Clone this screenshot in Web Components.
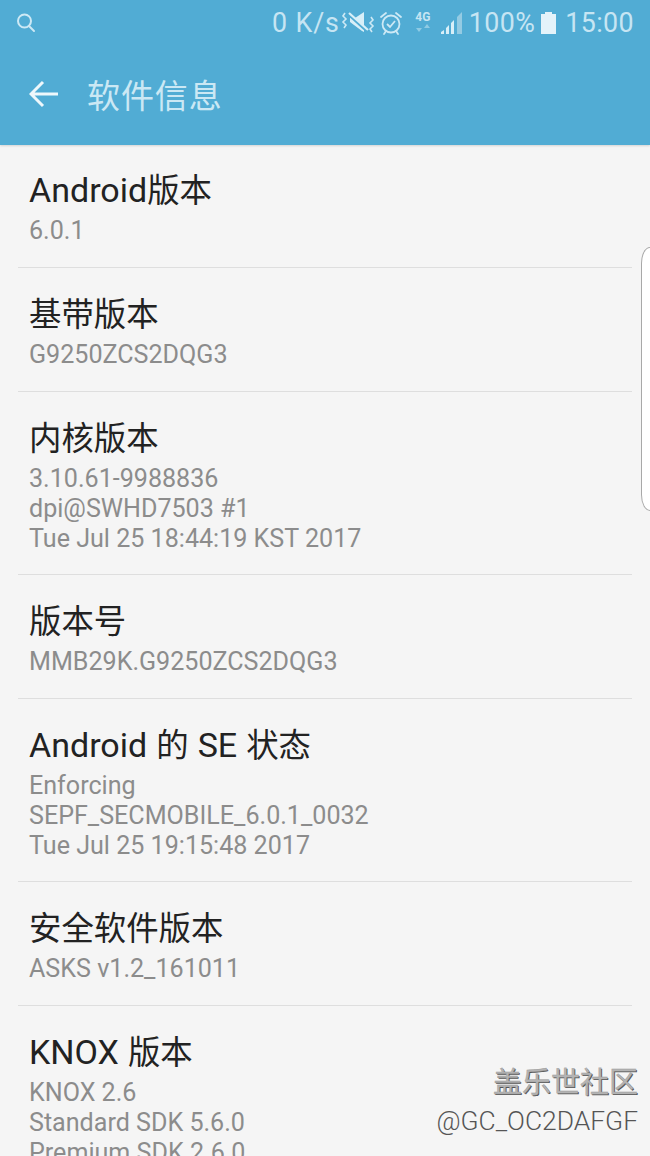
<!DOCTYPE html>
<html>
<head>
<meta charset="utf-8">
<style>
html, body { margin: 0; padding: 0; }
body {
  width: 650px; height: 1156px; overflow: hidden; position: relative;
  background: #f5f5f5;
  font-family: Roboto, "Noto Sans CJK SC", sans-serif;
}
</style>
</head>
<body>
<app-header title-text="软件信息"></app-header>
<info-list>
  <info-row head="Android版本"><div>6.0.1</div></info-row>
  <info-row head="基带版本"><div>G9250ZCS2DQG3</div></info-row>
  <info-row head="内核版本" long><div>3.10.61-9988836</div><div>dpi@SWHD7503 #1</div><div>Tue Jul 25 18:44:19 KST 2017</div></info-row>
  <info-row head="版本号"><div>MMB29K.G9250ZCS2DQG3</div></info-row>
  <info-row head="Android 的 SE 状态" long><div>Enforcing</div><div>SEPF_SECMOBILE_6.0.1_0032</div><div>Tue Jul 25 19:15:48 2017</div></info-row>
  <info-row head="安全软件版本"><div>ASKS v1.2_161011</div></info-row>
  <info-row head="KNOX 版本" last long><div>KNOX 2.6</div><div>Standard SDK 5.6.0</div><div>Premium SDK 2.6.0</div></info-row>
</info-list>
<edge-handle></edge-handle>
<water-mark></water-mark>

<script>
// top blue part: status bar + title bar
class AppHeader extends HTMLElement {
  constructor(){
    super();
    this.attachShadow({mode:"open"});
    this.shadowRoot.innerHTML = `
<style>
:host { display: block; background: #51acd4; height: 145px; box-shadow: 0 1px 2px #00000022; position: relative; color: #c6e5f3; }
#status { height: 45px; display: flex; align-items: center; padding: 0 16px 0 16px; box-sizing: border-box; font-size: 26.8px; letter-spacing: .4px; }
#status svg { display: block; flex: none; }
#right { margin-left: auto; display: flex; align-items: center; }
#bar { height: 100px; display: flex; align-items: center; padding: 0 0 2px 29px; box-sizing: border-box; }
#title { margin-left: 28px; font-size: 33px; letter-spacing: .9px; color: #cbe8f4; }
#net { margin-left: 10px; width: 20px; height: 26px; display: flex; flex-direction: column; align-items: center; font: bold 12px/14px Roboto, sans-serif; letter-spacing: 0; }
</style>
<div id="status">
  <svg width="20" height="20" viewBox="0 0 20 20" fill="none" stroke="#cde9f5" stroke-width="2"><circle cx="8.500" cy="8" r="6.500"/><path d="M13 13l5 5" stroke-linecap="round"/></svg>
  <div id="right">
    <span style="letter-spacing:.9px">0 K/s</span>
    <svg style="margin-left:1px" width="34" height="28" viewBox="0 0 34 28" fill="none" stroke="#cde9f5" stroke-width="1.600">
      <path d="M4 4l-2 3 3 3-3 3 3 3-2 3" />
      <path d="M30 8l2 3-3 3 3 3-3 3 2 3" />
      <path d="M9 9h5l9-6v20l-2-1-12-9z" fill="#d8eff8" stroke="none"/>
      <path d="M6 4l21 19" stroke="#51acd4" stroke-width="3"/>
      <path d="M8 4l19 17" stroke="#d8eff8" stroke-width="2.200"/>
    </svg>
    <svg style="margin-left:4px" width="24" height="26" viewBox="0 0 24 26" fill="none" stroke="#cde9f5" stroke-width="1.800">
      <circle cx="12" cy="14" r="8.500"/>
      <path d="M8 14l3 3 5-6"/>
      <path d="M2 7l5-4M22 7l-5-4M5 24l2-3M19 24l-2-3" stroke-linecap="round"/>
    </svg>
    <div id="net">4G<svg width="16" height="8" viewBox="0 0 16 8" fill="#8fcbe4"><path d="M4 0v4H1l3 4 3-4H4zM12 8V4H9l3-4 3 4h-3z"/></svg></div>
    <svg style="margin-left:8px" width="22" height="24" viewBox="0 0 22 24" fill="#d8eff8">
      <path d="M0 21l3-2v4H0zM5 17l3-3v9H5zM10 12l3-3v14h-3z"/><path d="M16 6l5-5v22h-5z" fill="#94cbe3"/>
    </svg>
    <span style="margin-left:6px">100%</span>
    <svg style="margin-left:6px" width="15" height="22" viewBox="0 0 15 22" fill="#e4f3fa"><path d="M4 0h7v2h4v20H0V2h4z"/></svg>
    <span style="margin-left:9px">15:00</span>
  </div>
</div>
<div id="bar">
  <svg width="30" height="28" viewBox="0 0 30 28" fill="none" stroke="#eef8fc" stroke-width="3"><path d="M29 14H3M14 2L2 14l12 12"/></svg>
  <div id="title"></div>
</div>
`;
  }
  connectedCallback(){
    this.shadowRoot.querySelector("#title").textContent = this.getAttribute("title-text");
  }
}

class InfoList extends HTMLElement {
  constructor(){
    super();
    this.attachShadow({mode:"open"});
    this.shadowRoot.innerHTML = `
<style>
:host { display: block; padding: 0 18px; }
</style>
<slot></slot>
`;
  }
}

// one setting: head line + grey value lines (slotted)
class InfoRow extends HTMLElement {
  constructor(){
    super();
    this.attachShadow({mode:"open"});
    this.shadowRoot.innerHTML = `
<style>
:host { display: block; padding: 27px 0 21px 11px; border-bottom: 1px solid #dedede; }
:host(:first-child) { padding-top: 26px; }
:host([long]) { padding-bottom: 20px; }
:host([last]) { border-bottom: 0; }
#head { font-size: 32.4px; line-height: 40px; height: 40px; color: #222; margin-bottom: 5px; white-space: pre; word-spacing: 1px; }
#head.latin { margin-top: -1px; margin-bottom: 6px; }
#head span { font-size: 34px; }
#val { font-size: 25.1px; line-height: 30px; color: #8c8c8c; }
</style>
<div id="head"></div>
<div id="val"><slot></slot></div>
`;
  }
  connectedCallback(){
    // latin runs are a bit bigger than the chinese ones in the reference
    var head = this.shadowRoot.querySelector("#head");
    this.getAttribute("head").split(/([A-Za-z]+)/).forEach(part => {
      if(/^[A-Za-z]+$/.test(part)){
        var s = document.createElement("span");
        s.textContent = part;
        head.appendChild(s);
        head.classList.add("latin");
      } else if(part){
        head.appendChild(document.createTextNode(part));
      }
    });
  }
}

// the edge panel tab on the right side of the screen
class EdgeHandle extends HTMLElement {
  constructor(){
    super();
    this.attachShadow({mode:"open"});
    this.shadowRoot.innerHTML = `
<style>
:host { display: block; position: absolute; top: 247px; right: 0; width: 9px; height: 264px; box-sizing: border-box; background: #fff; border: 1px solid #a8a8a8; border-right: 0; border-radius: 10px 0 0 10px / 18px 0 0 18px; }
</style>
`;
  }
}

class WaterMark extends HTMLElement {
  constructor(){
    super();
    this.attachShadow({mode:"open"});
    this.shadowRoot.innerHTML = `
<style>
:host { display: block; position: absolute; top: 1065px; right: 12px; text-align: right; }
#a { font-size: 29px; line-height: 36px; color: #b4b4b4; text-shadow: 1px 1px 0 #555; -webkit-text-stroke: .4px #999; }
#b { font-size: 26.4px; line-height: 30px; margin-top: 5px; font-weight: 300; color: #555; }
</style>
<div id="a">盖乐世社区</div>
<div id="b">@GC_OC2DAFGF</div>
`;
  }
}

customElements.define("app-header", AppHeader);
customElements.define("info-list", InfoList);
customElements.define("info-row", InfoRow);
customElements.define("edge-handle", EdgeHandle);
customElements.define("water-mark", WaterMark);
</script>
</body>
</html>
